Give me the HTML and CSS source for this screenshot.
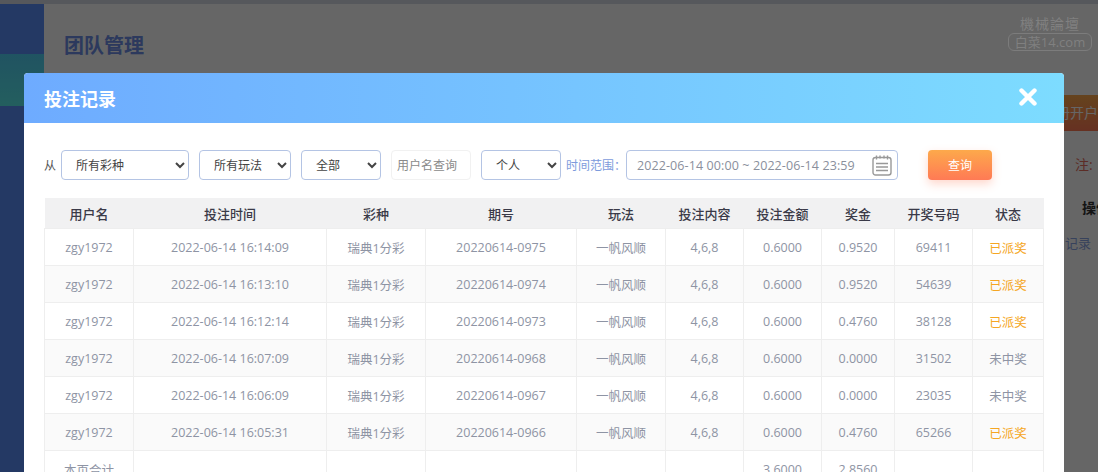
FILE: index.html
```html
<!DOCTYPE html>
<html lang="zh-CN">
<head>
    <meta charset="UTF-8">
    <title>团队管理</title>
    <link rel="stylesheet" href="styles.css">
</head>
<body>

<div class="page">
    <div class="sidebar">
        <div class="side-item"></div>
        <div class="side-item active"></div>
        <div class="side-item"></div>
    </div>
    <div class="main">
        <h1 class="page-title">团队管理</h1>
        <div class="page-actions"><span class="open-btn">注册开户</span></div>
        <div class="page-note">注:</div>
        <div class="page-op">操作</div>
        <div class="page-link">记录</div>
    </div>
</div>

<div class="overlay"></div>

<div class="watermark">
    <div class="wm-top">機械論壇</div>
    <div class="wm-box">白菜14.com</div>
</div>

<div class="modal">
    <div class="modal-head">
        <span class="modal-title">投注记录</span>
        <svg class="modal-close" width="18" height="18" viewBox="0 0 18 18">
            <path d="M2.5 2.5 L15.5 15.5 M15.5 2.5 L2.5 15.5" stroke="#fff" stroke-width="4.4" stroke-linecap="round"/>
        </svg>
    </div>
    <div class="modal-body">
        <div class="filters">
            <span class="from">从</span>
            <select class="sel sel-lottery"><option>所有彩种</option></select>
            <select class="sel sel-play"><option>所有玩法</option></select>
            <select class="sel sel-all"><option>全部</option></select>
            <input class="user-input" type="text" placeholder="用户名查询">
            <select class="sel sel-who"><option>个人</option></select>
            <span class="range-label">时间范围：</span>
            <div class="date-box">
                <span>2022-06-14 00:00 ~ 2022-06-14 23:59</span>
                <svg width="20" height="21" viewBox="0 0 20 21" fill="none" stroke="#999" stroke-width="1.4">
                    <rect x="1" y="2.5" width="18" height="17.5" rx="2.5"/>
                    <path d="M4.5 0.5v4M8 0.5v3M12 0.5v3M15.5 0.5v4M4 8.5h12M4 12h12M4 15.5h12"/>
                </svg>
            </div>
            <button class="query-btn">查询</button>
        </div>

        <table class="records">
            <colgroup>
                <col class="c-user"><col class="c-time"><col class="c-lottery"><col class="c-issue"><col class="c-play">
                <col class="c-content"><col class="c-amount"><col class="c-prize"><col class="c-code"><col class="c-state">
            </colgroup>
            <thead>
                <tr>
                    <th>用户名</th><th>投注时间</th><th>彩种</th><th>期号</th><th>玩法</th>
                    <th>投注内容</th><th>投注金额</th><th>奖金</th><th>开奖号码</th><th>状态</th>
                </tr>
            </thead>
            <tbody>
                <tr>
                    <td>zgy1972</td><td>2022-06-14 16:14:09</td><td>瑞典1分彩</td><td>20220614-0975</td><td>一帆风顺</td>
                    <td>4,6,8</td><td>0.6000</td><td>0.9520</td><td>69411</td><td class="won">已派奖</td>
                </tr>
                <tr>
                    <td>zgy1972</td><td>2022-06-14 16:13:10</td><td>瑞典1分彩</td><td>20220614-0974</td><td>一帆风顺</td>
                    <td>4,6,8</td><td>0.6000</td><td>0.9520</td><td>54639</td><td class="won">已派奖</td>
                </tr>
                <tr>
                    <td>zgy1972</td><td>2022-06-14 16:12:14</td><td>瑞典1分彩</td><td>20220614-0973</td><td>一帆风顺</td>
                    <td>4,6,8</td><td>0.6000</td><td>0.4760</td><td>38128</td><td class="won">已派奖</td>
                </tr>
                <tr>
                    <td>zgy1972</td><td>2022-06-14 16:07:09</td><td>瑞典1分彩</td><td>20220614-0968</td><td>一帆风顺</td>
                    <td>4,6,8</td><td>0.6000</td><td>0.0000</td><td>31502</td><td>未中奖</td>
                </tr>
                <tr>
                    <td>zgy1972</td><td>2022-06-14 16:06:09</td><td>瑞典1分彩</td><td>20220614-0967</td><td>一帆风顺</td>
                    <td>4,6,8</td><td>0.6000</td><td>0.0000</td><td>23035</td><td>未中奖</td>
                </tr>
                <tr>
                    <td>zgy1972</td><td>2022-06-14 16:05:31</td><td>瑞典1分彩</td><td>20220614-0966</td><td>一帆风顺</td>
                    <td>4,6,8</td><td>0.6000</td><td>0.4760</td><td>65266</td><td class="won">已派奖</td>
                </tr>
                <tr>
                    <td>本页合计</td><td></td><td></td><td></td><td></td>
                    <td></td><td>3.6000</td><td>2.8560</td><td></td><td></td>
                </tr>
            </tbody>
        </table>
    </div>
</div>

</body>
</html>
```

FILE: styles.css
```css
* {
    box-sizing: border-box;
}

html, body {
    height: 100%;
}

body {
    margin: 0;
    overflow: hidden;
    background-color: #fff;
    font-family: "Open Sans", "Noto Sans CJK SC", sans-serif;
}

.page {
    display: flex;
    height: 472px;
    padding-top: 4px;
    background-color: #d8dce6;
}

.sidebar {
    width: 44px;
    background-color: #5a90fa;
}

.side-item {
    height: 50px;
}

.side-item.active {
    height: 52px;
    background: linear-gradient(#52d0f4, #58ecec);
}

.main {
    flex: 1;
    position: relative;
    background-color: #fff;
    padding: 28px 20px 0;
}

.page-title {
    margin: 0;
    font-size: 20px;
    line-height: 28px;
    font-weight: 700;
    color: #6f90e8;
}

.page-actions {
    position: absolute;
    left: 1020px;
    top: 91px;
    width: 34px;
    height: 36px;
    overflow: hidden;
}

.open-btn {
    display: block;
    width: 34px;
    height: 36px;
    line-height: 36px;
    direction: rtl;
    white-space: nowrap;
    font-size: 14px;
    color: #fff;
    background: linear-gradient(#fda94b, #ff7a55);
}

.page-note {
    position: absolute;
    left: 1031px;
    top: 150px;
    font-size: 14px;
    color: #e6705f;
}

.page-op {
    position: absolute;
    left: 1038px;
    top: 193px;
    white-space: nowrap;
    font-size: 14px;
    font-weight: 700;
    color: #333;
}

.page-link {
    position: absolute;
    left: 1021px;
    top: 229px;
    font-size: 13px;
    color: #8ba5e6;
}

.watermark {
    position: absolute;
    left: 1008px;
    top: 16px;
    width: 84px;
    text-align: center;
    color: #808080;
}

.wm-top {
    font-size: 14px;
    line-height: 16px;
    letter-spacing: 1px;
}

.wm-box {
    margin-top: 1px;
    height: 18px;
    line-height: 16px;
    font-size: 13px;
    border: 1px solid #7c7c7c;
    border-radius: 6px;
    white-space: nowrap;
}

.overlay {
    position: absolute;
    inset: 0;
    background-color: rgba(0, 0, 0, 0.6);
}

.modal {
    position: absolute;
    left: 24px;
    top: 73px;
    width: 1040px;
    height: 399px;
    overflow: hidden;
    border-radius: 4px 4px 0 0;
    background-color: #fff;
}

.modal-head {
    display: flex;
    justify-content: space-between;
    align-items: center;
    height: 50px;
    padding: 0 27px 0 20px;
    background: linear-gradient(90deg, #6eabff, #7ddcff);
}

.modal-title {
    font-size: 18px;
    font-weight: 700;
    color: #fff;
}

.modal-close {
    margin-bottom: 2px;
}

.modal-body {
    padding: 27px 20px 0;
}

.filters {
    display: flex;
    align-items: center;
    height: 30px;
    margin-bottom: 18px;
    font-size: 12px;
}

.from {
    width: 17px;
    color: #555;
}

.sel {
    height: 30px;
    padding-left: 10px;
    font-family: inherit;
    font-size: 12px;
    color: #444;
    background-color: #fff;
    border: 1px solid #b4c4e4;
    border-radius: 4px;
}

.sel-lottery {
    width: 128px;
    margin-right: 10px;
}

.sel-play {
    width: 92px;
    margin-right: 10px;
}

.sel-all {
    width: 80px;
    margin-right: 10px;
}

.sel-who {
    width: 80px;
    margin-right: 5px;
}

.user-input {
    width: 80px;
    height: 30px;
    margin-right: 10px;
    padding: 0 5px;
    font-family: inherit;
    font-size: 12px;
    border: 1px solid #f1f1f1;
    border-radius: 4px;
}

.user-input::placeholder {
    color: #8a8a8a;
}

.range-label {
    width: 60px;
    color: #7d9bdc;
}

.date-box {
    display: flex;
    justify-content: space-between;
    align-items: center;
    width: 272px;
    height: 30px;
    padding: 0 5px 0 10px;
    font-size: 12.5px;
    letter-spacing: 0.1px;
    color: #8a8f9c;
    border: 1px solid #b4c4e4;
    border-radius: 4px;
}

.query-btn {
    width: 64px;
    height: 30px;
    margin-left: 30px;
    font-family: inherit;
    font-size: 12px;
    color: #fff;
    border: none;
    border-radius: 4px;
    background: linear-gradient(#fda94b, #ff7a55);
    box-shadow: 0 4px 10px rgba(255, 122, 85, 0.3);
}

.records {
    width: 999px;
    table-layout: fixed;
    border-collapse: collapse;
    font-size: 12.5px;
}

.c-user { width: 89px; }
.c-time { width: 193px; }
.c-lottery { width: 99px; }
.c-issue { width: 151px; }
.c-play { width: 89px; }
.c-content { width: 78px; }
.c-amount { width: 78px; }
.c-prize { width: 73px; }
.c-code { width: 78px; }
.c-state { width: 71px; }

.records th {
    height: 30px;
    padding: 1px 0 0;
    font-size: 13px;
    font-weight: 500;
    color: #3a3a48;
    background-color: #f1f1f2;
}

.records td {
    height: 37px;
    padding: 2px 0 0;
    text-align: center;
    color: #8e94a4;
    border: 1px solid #eeeeee;
}

.records tbody tr:nth-child(even) td {
    background-color: #fafafa;
}

.records td.won {
    color: #f5a623;
}
```
